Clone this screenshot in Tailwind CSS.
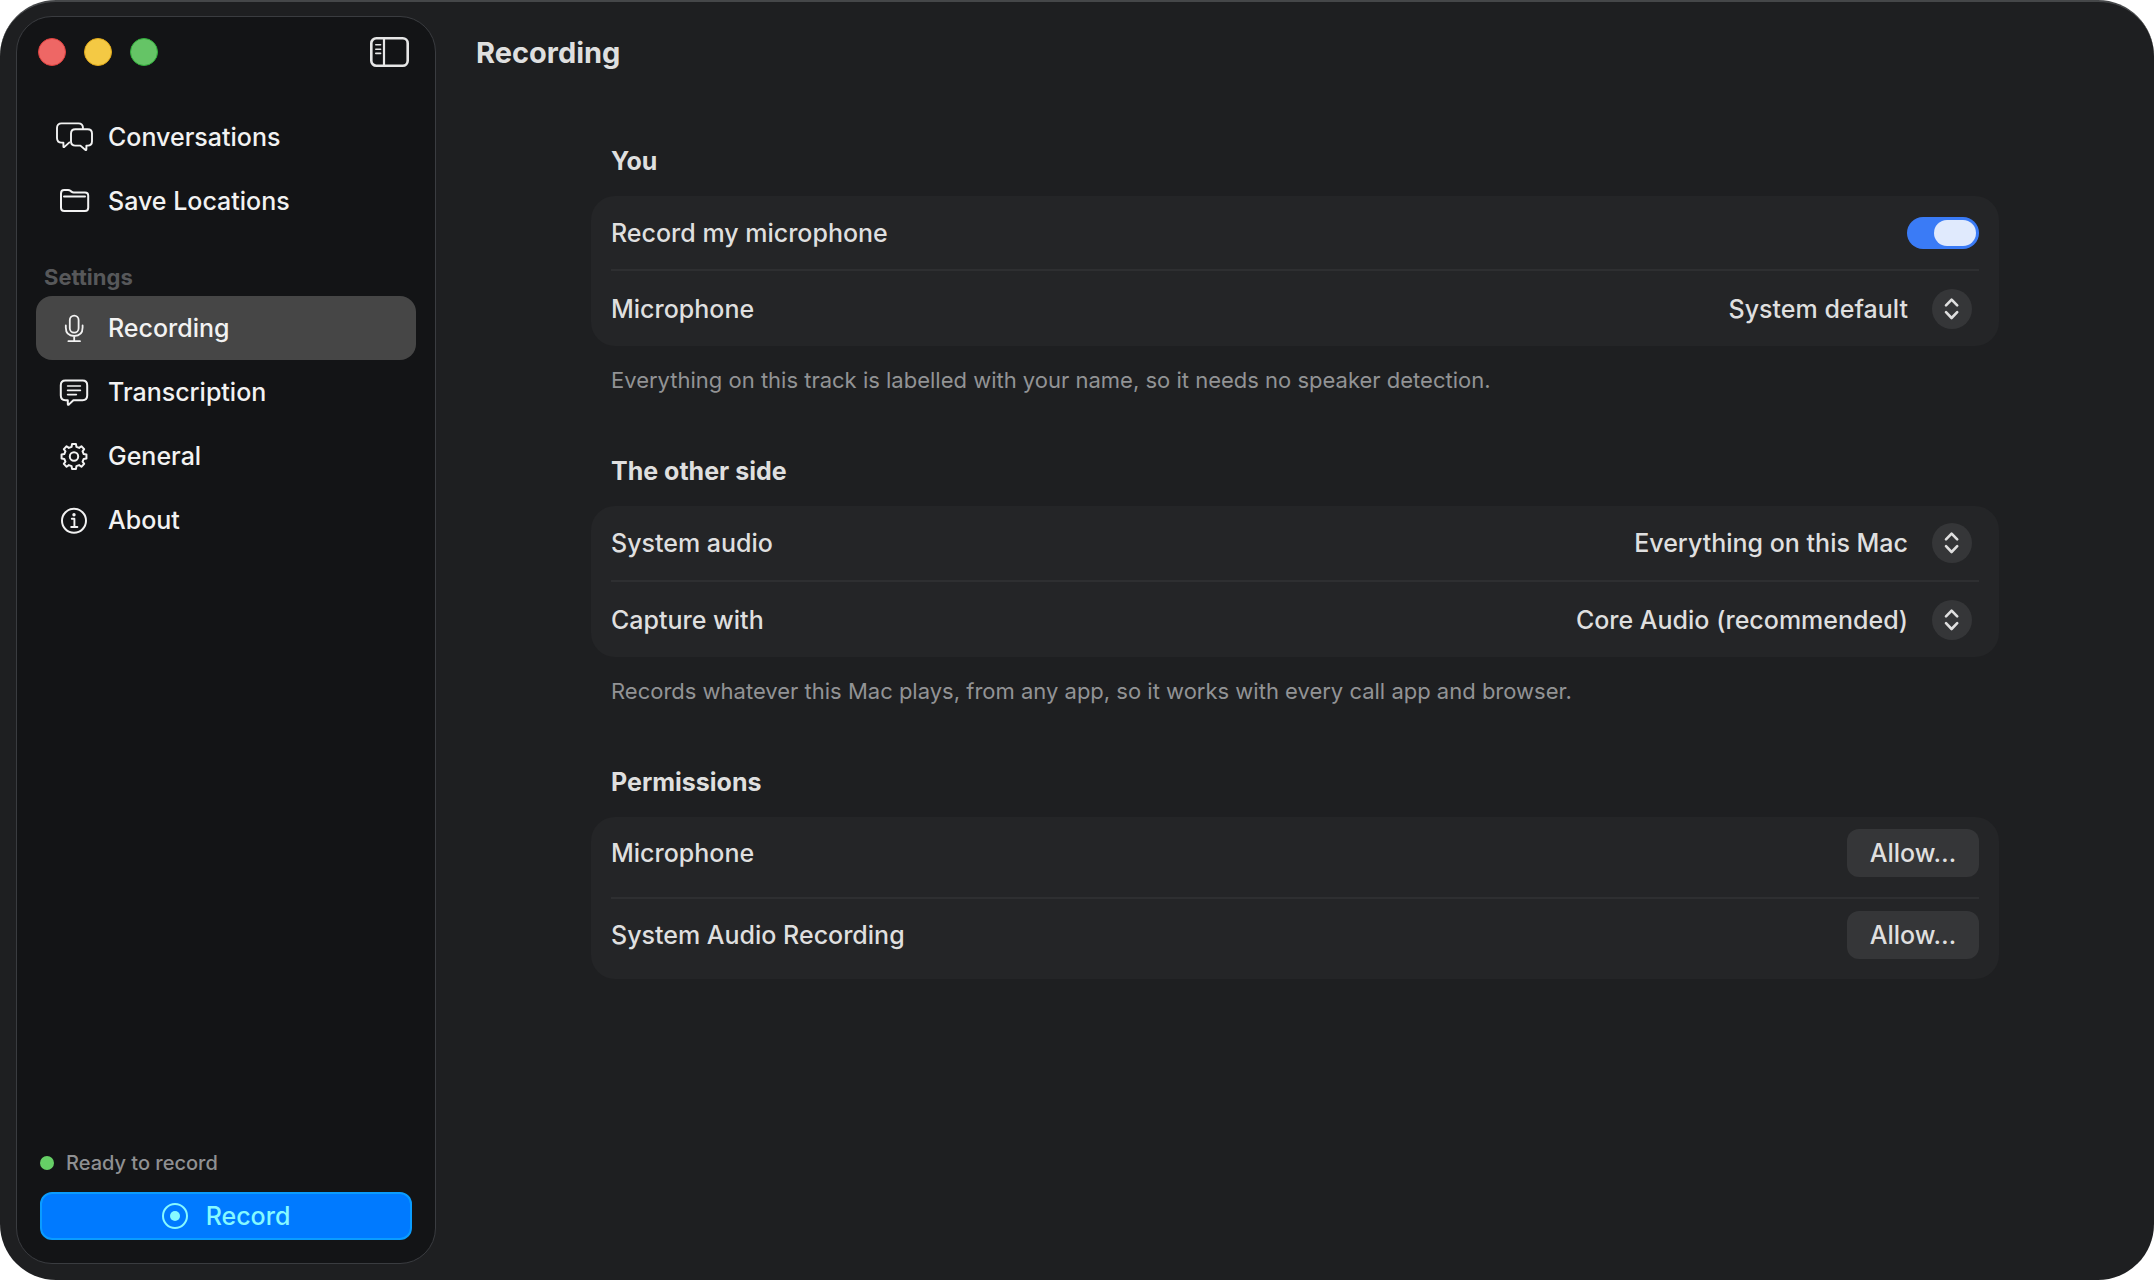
<!DOCTYPE html>
<html lang="en">

<head>
    <meta charset="UTF-8">
    <meta name="viewport" content="width=device-width, initial-scale=1.0">
    <title>Recording</title>
    <script src="https://cdn.jsdelivr.net/npm/@tailwindcss/browser@4"></script>
</head>

<body class="bg-white font-['Inter','Liberation_Sans',sans-serif] text-[25px] leading-8 font-medium text-[#dfdfdf]">
    <div class="flex min-h-screen rounded-[56px] border-t-2 border-[#454749] bg-[#1e1f21]">

        <!-- Sidebar -->
        <aside class="mt-3.5 mb-4 ml-4 flex w-[420px] shrink-0 flex-col rounded-[36px] border border-[#3a3c40] bg-[#131416]">
            <div class="flex h-[70px] items-center justify-between pr-[26px] pl-[21px]">
                <div class="flex gap-[18px]">
                    <button type="button" aria-label="Close" class="size-7 rounded-full border border-[#e0413f] bg-[#ee6765]"></button>
                    <button type="button" aria-label="Minimize" class="size-7 rounded-full border border-[#e0a91a] bg-[#f4c944]"></button>
                    <button type="button" aria-label="Zoom" class="size-7 rounded-full border border-[#2fae3a] bg-[#65c466]"></button>
                </div>
                <button type="button" aria-label="Toggle sidebar">
                    <svg class="block h-[30px] w-[39px]" viewBox="0 0 39 30" fill="none" stroke="#e6e6e6" stroke-linecap="round">
                        <rect x="1.3" y="1.3" width="36.4" height="27.4" rx="5" stroke-width="2.6" />
                        <path d="M14 2V28" stroke-width="2.2" />
                        <path d="M5.8 7.8H10.6M5.8 12.2H10.6M5.8 16.4H10.6" stroke-width="1.6" />
                    </svg>
                </button>
            </div>

            <nav class="flex flex-col px-[19px] pt-[18px] text-[#f2f2f2]">
                <a href="#" class="flex h-16 items-center gap-3.5 rounded-2xl pl-[18px]">
                    <svg class="size-10" viewBox="0 0 40 40" fill="none" stroke="currentColor" stroke-width="1.9" stroke-linecap="round" stroke-linejoin="round">
                        <path d="M29 11.2Q29 6.4 24.4 6.4H7.6Q3 6.4 3 11V21Q3 25.6 7.6 25.6H9.4V29.4Q9.4 30.6 10.4 29.9L15.4 25.4" />
                        <path d="M21.4 12.2H33.6Q38 12.2 38 16.6V24.2Q38 28.6 33.6 28.6H32.4V32.2Q32.4 33.6 31.2 32.7L26.4 28.6H21.4Q17 28.6 17 24.2V16.6Q17 12.2 21.4 12.2Z" />
                    </svg>
                    Conversations
                </a>
                <a href="#" class="flex h-16 items-center gap-3.5 rounded-2xl pl-[18px]">
                    <svg class="size-10" viewBox="0 0 40 40" fill="none" stroke="currentColor" stroke-width="2" stroke-linecap="round" stroke-linejoin="round">
                        <path d="M7 12.4Q7 9 10.2 9H14Q15.4 9 16.4 9.8L17.4 10.6Q18.4 11.4 19.8 11.4H31Q34.2 11.4 34.2 14.6V26.8Q34.2 30 31 30H10.2Q7 30 7 26.8Z" />
                        <path d="M10 15.4H31" />
                    </svg>
                    Save Locations
                </a>

                <h2 class="mt-7 mb-[3px] pl-2 text-[22px] font-bold text-[#57585a]">Settings</h2>
                <a href="#" aria-current="page" class="flex h-16 items-center gap-3.5 rounded-2xl bg-[#464646] pl-[18px]">
                    <svg class="size-10" viewBox="0 0 40 40" fill="none" stroke="currentColor" stroke-width="1.8" stroke-linecap="round">
                        <rect x="15.8" y="7.6" width="8.8" height="17" rx="4.4" />
                        <path d="M11.8 17.4V19.6Q11.8 28 20.2 28Q28.6 28 28.6 19.6V17.4M20.2 28V33M14.4 33.2H26" />
                    </svg>
                    Recording
                </a>
                <a href="#" class="flex h-16 items-center gap-3.5 rounded-2xl pl-[18px]">
                    <svg class="size-10" viewBox="0 0 40 40" fill="none" stroke="currentColor" stroke-width="2" stroke-linecap="round" stroke-linejoin="round">
                        <path d="M11.4 8.6H28.6Q33.2 8.6 33.2 13.2V23.6Q33.2 28.2 28.6 28.2H19.4L15 32.4Q13.8 33.4 13.8 32V28.2H11.4Q6.8 28.2 6.8 23.6V13.2Q6.8 8.6 11.4 8.6Z" />
                        <path d="M13.6 14H26.4M13.6 18.4H26.4M13.6 22.6H22.4" stroke-width="1.6" />
                    </svg>
                    Transcription
                </a>
                <a href="#" class="flex h-16 items-center gap-3.5 rounded-2xl pl-[18px]">
                    <svg class="size-10" viewBox="-20 -20.5 40 40" fill="none" stroke="currentColor" stroke-width="2" stroke-linejoin="round">
                        <path d="M-2.42 -9.7L-1.97 -12.44H1.97L2.42 -9.7L5.15 -8.57L7.41 -10.19L10.19 -7.41L8.57 -5.15L9.7 -2.42L12.44 -1.97V1.97L9.7 2.42L8.57 5.15L10.19 7.41L7.41 10.19L5.15 8.57L2.42 9.7L1.97 12.44H-1.97L-2.42 9.7L-5.15 8.57L-7.41 10.19L-10.19 7.41L-8.57 5.15L-9.7 2.42L-12.44 1.97V-1.97L-9.7 -2.42L-8.57 -5.15L-10.19 -7.41L-7.41 -10.19L-5.15 -8.57Z" />
                        <circle r="4.2" />
                    </svg>
                    General
                </a>
                <a href="#" class="flex h-16 items-center gap-3.5 rounded-2xl pl-[18px]">
                    <svg class="size-10" viewBox="0 0 40 40" fill="none" stroke="currentColor" stroke-width="2" stroke-linecap="round" stroke-linejoin="round">
                        <circle cx="20" cy="20.8" r="12" />
                        <path d="M17.8 18.8H20.4V26.8M17.2 27H23.4" stroke-width="1.9" />
                        <circle cx="20" cy="14.8" r="1.7" fill="currentColor" stroke="none" />
                    </svg>
                    About
                </a>
            </nav>

            <div class="mt-auto px-[23px] pb-[23px]">
                <p class="mb-[17px] flex items-center gap-3 text-[20px] leading-6 text-[#8f9092]">
                    <span class="size-3.5 rounded-full bg-[#66cf66]"></span>
                    Ready to record
                </p>
                <button type="button" class="flex h-12 w-full items-center justify-center gap-[18px] rounded-xl border-2 border-[#0a9cff] bg-[#007aff] text-[#86f9ff]">
                    <svg class="size-[26px]" viewBox="0 0 26 26" fill="none" stroke="currentColor" stroke-width="2">
                        <circle cx="13" cy="13" r="12" />
                        <circle cx="13" cy="13" r="5" fill="currentColor" stroke="none" />
                    </svg>
                    Record
                </button>
            </div>
        </aside>

        <!-- Settings form -->
        <main class="min-w-0 grow">
            <header class="flex h-[102px] items-center pl-10">
                <h1 class="text-[29px] font-bold">Recording</h1>
            </header>

            <form class="flex flex-col gap-[61px] px-[155px] pt-[41px]">
                <section>
                    <h2 class="mb-[19px] pl-5 font-bold">You</h2>
                    <div class="rounded-3xl bg-[#242527] px-5">
                        <div class="flex h-[73px] items-center justify-between">
                            <label for="recordMic">Record my microphone</label>
                            <input type="checkbox" role="switch" id="recordMic" checked
                                class="flex h-8 w-[72px] appearance-none items-center rounded-full bg-[#3a7bf6] px-[3px] before:h-[26px] before:w-[42px] before:rounded-full before:bg-[#e0eafd] checked:justify-end">
                        </div>
                        <div class="flex h-[77px] items-center justify-between border-t-2 border-[#2e2f31]">
                            <label for="micSource">Microphone</label>
                            <div class="relative flex items-center">
                                <select id="micSource" class="field-sizing-content h-10 appearance-none bg-transparent pr-[71px]">
                                    <option>System default</option>
                                </select>
                                <span class="pointer-events-none absolute right-[7px] flex size-10 items-center justify-center rounded-full bg-[#353638]">
                                    <svg class="h-6 w-4" viewBox="0 0 16 24" fill="none" stroke="currentColor" stroke-width="2.6" stroke-linecap="round" stroke-linejoin="round">
                                        <path d="M2 8.4L7.6 2.6L13.2 8.4M2 15.2L7.6 21L13.2 15.2" />
                                    </svg>
                                </span>
                            </div>
                        </div>
                    </div>
                    <p class="mt-5 pl-5 text-[22px] leading-7 font-normal text-[#929395]">Everything on this track is labelled with your name, so it needs no speaker detection.</p>
                </section>

                <section>
                    <h2 class="mb-[19px] pl-5 font-bold">The other side</h2>
                    <div class="rounded-3xl bg-[#242527] px-5">
                        <div class="flex h-[74px] items-center justify-between">
                            <label for="systemAudio">System audio</label>
                            <div class="relative flex items-center">
                                <select id="systemAudio" class="field-sizing-content h-10 appearance-none bg-transparent pr-[71px]">
                                    <option>Everything on this Mac</option>
                                </select>
                                <span class="pointer-events-none absolute right-[7px] flex size-10 items-center justify-center rounded-full bg-[#353638]">
                                    <svg class="h-6 w-4" viewBox="0 0 16 24" fill="none" stroke="currentColor" stroke-width="2.6" stroke-linecap="round" stroke-linejoin="round">
                                        <path d="M2 8.4L7.6 2.6L13.2 8.4M2 15.2L7.6 21L13.2 15.2" />
                                    </svg>
                                </span>
                            </div>
                        </div>
                        <div class="flex h-[77px] items-center justify-between border-t-2 border-[#2e2f31]">
                            <label for="captureWith">Capture with</label>
                            <div class="relative flex items-center">
                                <select id="captureWith" class="field-sizing-content h-10 appearance-none bg-transparent pr-[71px]">
                                    <option>Core Audio (recommended)</option>
                                </select>
                                <span class="pointer-events-none absolute right-[7px] flex size-10 items-center justify-center rounded-full bg-[#353638]">
                                    <svg class="h-6 w-4" viewBox="0 0 16 24" fill="none" stroke="currentColor" stroke-width="2.6" stroke-linecap="round" stroke-linejoin="round">
                                        <path d="M2 8.4L7.6 2.6L13.2 8.4M2 15.2L7.6 21L13.2 15.2" />
                                    </svg>
                                </span>
                            </div>
                        </div>
                    </div>
                    <p class="mt-5 pl-5 text-[22px] leading-7 font-normal text-[#929395]">Records whatever this Mac plays, from any app, so it works with every call app and browser.</p>
                </section>

                <section>
                    <h2 class="mb-[19px] pl-5 font-bold">Permissions</h2>
                    <div class="rounded-3xl bg-[#242527] px-5">
                        <div class="flex items-center justify-between pt-3 pb-5">
                            <span id="micPermission">Microphone</span>
                            <button type="button" aria-describedby="micPermission" class="h-12 w-[132px] rounded-xl bg-[#353638]">Allow…</button>
                        </div>
                        <div class="flex items-center justify-between border-t-2 border-[#2e2f31] pt-3 pb-5">
                            <span id="audioPermission">System Audio Recording</span>
                            <button type="button" aria-describedby="audioPermission" class="h-12 w-[132px] rounded-xl bg-[#353638]">Allow…</button>
                        </div>
                    </div>
                </section>
            </form>
        </main>
    </div>
</body>

</html>
